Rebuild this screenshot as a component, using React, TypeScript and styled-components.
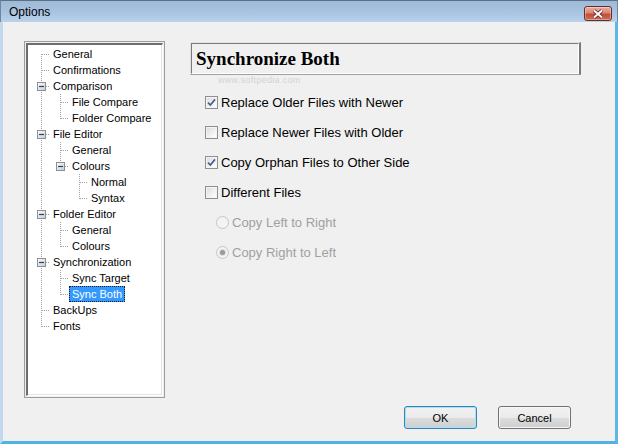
import React from "react";
import styled, { createGlobalStyle, css } from "styled-components";

const GlobalStyle = createGlobalStyle`
  html, body {
    margin: 0;
    padding: 0;
    background: #f0f0f0;
  }
  * {
    box-sizing: border-box;
  }
`;

interface TreeNode {
  label: string;
  selected?: boolean;
  children?: TreeNode[];
}

const tree: TreeNode[] = [
  { label: "General" },
  { label: "Confirmations" },
  {
    label: "Comparison",
    children: [{ label: "File Compare" }, { label: "Folder Compare" }],
  },
  {
    label: "File Editor",
    children: [
      { label: "General" },
      { label: "Colours", children: [{ label: "Normal" }, { label: "Syntax" }] },
    ],
  },
  {
    label: "Folder Editor",
    children: [{ label: "General" }, { label: "Colours" }],
  },
  {
    label: "Synchronization",
    children: [{ label: "Sync Target" }, { label: "Sync Both", selected: true }],
  },
  { label: "BackUps" },
  { label: "Fonts" },
];

interface FlatRow {
  label: string;
  level: number;
  guides: boolean[];
  isFirstRoot: boolean;
  isLast: boolean;
  expanded: boolean;
  selected: boolean;
}

const flatten = (nodes: TreeNode[], level: number, guides: boolean[], out: FlatRow[]) => {
  nodes.forEach((node, i) => {
    const isLast = i === nodes.length - 1;
    out.push({
      label: node.label,
      level,
      guides,
      isFirstRoot: level === 0 && i === 0,
      isLast,
      expanded: !!node.children,
      selected: !!node.selected,
    });
    if (node.children) flatten(node.children, level + 1, [...guides, !isLast], out);
  });
  return out;
};

const rows = flatten(tree, 0, [], []);

const Window = styled.div`
  width: 618px;
  height: 444px;
  display: flex;
  flex-direction: column;
  font-family: "Liberation Sans", Arial, sans-serif;
  background: #f0f0f0;
  overflow: hidden;
`;

const TitleBar = styled.div`
  height: 22px;
  flex: none;
  display: flex;
  align-items: center;
  justify-content: space-between;
  padding: 0 5px 0 8px;
  border-top: 1px solid #5b6f86;
  border-left: 1px solid #6f86a0;
  border-right: 1px solid #6f86a0;
  background: linear-gradient(to bottom, #9fbad7, #aac5e2 60%, #bad2ec);
`;

const Title = styled.span`
  font-size: 12px;
  color: #000;
  padding-top: 1px;
`;

const CloseButton = styled.div`
  width: 28px;
  height: 15px;
  margin-top: 4px;
  border: 1px solid #6a2b25;
  border-radius: 3px;
  display: flex;
  align-items: center;
  justify-content: center;
  background: linear-gradient(to bottom, #e7b0a6 0%, #d98676 45%, #c24d39 55%, #cf6d55 100%);
  box-shadow: inset 0 0 0 1px rgba(255, 255, 255, 0.35);
`;

const Body = styled.div`
  flex: 1;
  display: flex;
  flex-direction: column;
  padding: 19px 34px 0 21px;
  border-left: 3px solid #c2d8ee;
  border-right: 3px solid #5cb6e6;
  border-bottom: 3px solid #4fb2e4;
`;

const Main = styled.div`
  display: flex;
  gap: 25px;
  height: 357px;
`;

const TreePanel = styled.div`
  width: 141px;
  flex: none;
  border: 1px solid #9c9c9c;
  padding: 1px;
  background: #f0f0f0;
`;

const TreeInner = styled.div`
  height: 100%;
  background: #fff;
  border-top: 2px solid #6e6e6e;
  border-left: 2px solid #6e6e6e;
  border-right: 1px solid #fff;
  border-bottom: 1px solid #fff;
  box-shadow: inset -1px -1px 0 #e3e3e3;
  padding-top: 1px;
`;

const TreeRow = styled.div`
  display: flex;
  height: 16px;
  align-items: center;
`;

const Guide = styled.svg`
  flex: none;
  display: block;
`;

const TreeLabel = styled.span<{ $selected?: boolean }>`
  font-size: 11px;
  line-height: 14px;
  height: 16px;
  padding: 0 2px;
  border: 1px solid transparent;
  color: #000;
  white-space: nowrap;
  ${(p) =>
    p.$selected &&
    css`
      background: #3399ff;
      color: #fff;
      border: 1px dotted #1a1a1a;
    `}
`;

const LINE = "#a0a0a0";

const GuideColumn = ({ on }: { on: boolean }) => (
  <Guide width="19" height="16">
    {on && <line x1="13.5" y1="0" x2="13.5" y2="16" stroke={LINE} strokeDasharray="1 1" />}
  </Guide>
);

const Connector = ({ row }: { row: FlatRow }) => (
  <Guide width="22" height="16">
    <line
      x1="13.5"
      y1={row.isFirstRoot ? 8 : 0}
      x2="13.5"
      y2={row.isLast ? 9 : 16}
      stroke={LINE}
      strokeDasharray="1 1"
    />
    <line x1="14" y1="8.5" x2="21" y2="8.5" stroke={LINE} strokeDasharray="1 1" />
    {row.expanded && (
      <>
        <defs>
          <linearGradient id="exp" x1="0" y1="0" x2="1" y2="1">
            <stop offset="0" stopColor="#ffffff" />
            <stop offset="1" stopColor="#c9c9c9" />
          </linearGradient>
        </defs>
        <rect x="9.5" y="4.5" width="8" height="8" fill="url(#exp)" stroke="#8e8f8f" />
        <line x1="11" y1="8.5" x2="16" y2="8.5" stroke="#1c3f94" strokeWidth="1.2" />
      </>
    )}
  </Guide>
);

const Pane = styled.div`
  position: relative;
  flex: 1;
  display: flex;
  flex-direction: column;
`;

const Header = styled.div`
  margin-top: 1px;
  height: 33px;
  border-style: solid;
  border-width: 1px 2px 1px 1px;
  border-color: #e3e3e3 #7b7b7b #a0a0a0 #e3e3e3;
`;

const HeaderInner = styled.div`
  height: 100%;
  border-style: solid;
  border-width: 1px;
  border-color: #7b7b7b #fff #fff #7b7b7b;
  padding: 0 4px;
  display: flex;
  align-items: center;
  font-family: "Liberation Serif", "Times New Roman", serif;
  font-weight: bold;
  font-size: 19px;
  color: #000;
`;

const Watermark = styled.span`
  position: absolute;
  left: 28px;
  top: 34px;
  font-size: 9px;
  color: #d4d4d4;
  letter-spacing: 0.3px;
`;

const OptionList = styled.div`
  margin-top: 12px;
  padding-left: 15px;
  display: flex;
  flex-direction: column;
`;

const OptionRow = styled.label<{ $indent?: boolean; $disabled?: boolean }>`
  height: 30px;
  display: flex;
  align-items: center;
  gap: 3px;
  padding-left: ${(p) => (p.$indent ? "11px" : "0")};
  font-size: 13px;
  color: ${(p) => (p.$disabled ? "#a0a0a0" : "#000")};
`;

const CheckBox = styled.span`
  width: 13px;
  height: 13px;
  flex: none;
  border: 1px solid #8f8f8f;
  background: linear-gradient(135deg, #d9d9d9, #f7f7f7 70%, #ffffff);
  box-shadow: inset 0 0 0 1px #f4f4f4;
  display: flex;
  align-items: center;
  justify-content: center;
`;

const Radio = styled.span<{ $checked?: boolean }>`
  width: 13px;
  height: 13px;
  flex: none;
  border-radius: 50%;
  border: 1px solid #c6c6c6;
  background: #f3f3f3;
  display: flex;
  align-items: center;
  justify-content: center;
  &::after {
    content: "";
    width: 5px;
    height: 5px;
    border-radius: 50%;
    background: ${(p) => (p.$checked ? "#9a9a9a" : "transparent")};
    box-shadow: ${(p) => (p.$checked ? "0 0 0 1px #dcdcdc" : "none")};
  }
`;

const Footer = styled.div`
  margin-top: 8px;
  display: flex;
  justify-content: flex-end;
  gap: 21px;
  padding-right: 10px;
`;

const Button = styled.button<{ $default?: boolean }>`
  width: 73px;
  height: 23px;
  border-radius: 3px;
  font-family: "Liberation Sans", Arial, sans-serif;
  font-size: 11px;
  color: #000;
  padding: 0;
  border: 1px solid ${(p) => (p.$default ? "#3c7fb1" : "#707070")};
  background: linear-gradient(to bottom, #f2f2f2 0%, #ebebeb 50%, #dddddd 50%, #cfcfcf 100%);
  box-shadow: inset 0 0 0 1px ${(p) => (p.$default ? "#9fe6fb" : "#f8f8f8")};
`;

const Check = () => (
  <svg width="9" height="9" viewBox="0 0 9 9">
    <path d="M1 4.6 L3.4 7 L8 1.4" fill="none" stroke="#4a5e8c" strokeWidth="1.7" />
  </svg>
);

const options = [
  { label: "Replace Older Files with Newer", checked: true },
  { label: "Replace Newer Files with Older", checked: false },
  { label: "Copy Orphan Files to Other Side", checked: true },
  { label: "Different Files", checked: false },
];

const App = () => (
  <Window>
    <GlobalStyle />
    <TitleBar>
      <Title>Options</Title>
      <CloseButton>
        <svg width="12" height="10" viewBox="0 0 12 10">
          <path d="M2 1.5 L10 8.5 M10 1.5 L2 8.5" stroke="#5a1f18" strokeWidth="3.6" />
          <path d="M2 1.5 L10 8.5 M10 1.5 L2 8.5" stroke="#fff" strokeWidth="2" />
        </svg>
      </CloseButton>
    </TitleBar>
    <Body>
      <Main>
        <TreePanel>
          <TreeInner>
            {rows.map((row, i) => (
              <TreeRow key={i}>
                {row.guides.map((on, d) => (
                  <GuideColumn key={d} on={on} />
                ))}
                <Connector row={row} />
                <TreeLabel $selected={row.selected}>{row.label}</TreeLabel>
              </TreeRow>
            ))}
          </TreeInner>
        </TreePanel>
        <Pane>
          <Header>
            <HeaderInner>Synchronize Both</HeaderInner>
          </Header>
          <Watermark>www.softpedia.com</Watermark>
          <OptionList>
            {options.map((o) => (
              <OptionRow key={o.label}>
                <CheckBox>{o.checked && <Check />}</CheckBox>
                {o.label}
              </OptionRow>
            ))}
            <OptionRow $indent $disabled>
              <Radio />
              Copy Left to Right
            </OptionRow>
            <OptionRow $indent $disabled>
              <Radio $checked />
              Copy Right to Left
            </OptionRow>
          </OptionList>
        </Pane>
      </Main>
      <Footer>
        <Button $default>OK</Button>
        <Button>Cancel</Button>
      </Footer>
    </Body>
  </Window>
);

export default App;
